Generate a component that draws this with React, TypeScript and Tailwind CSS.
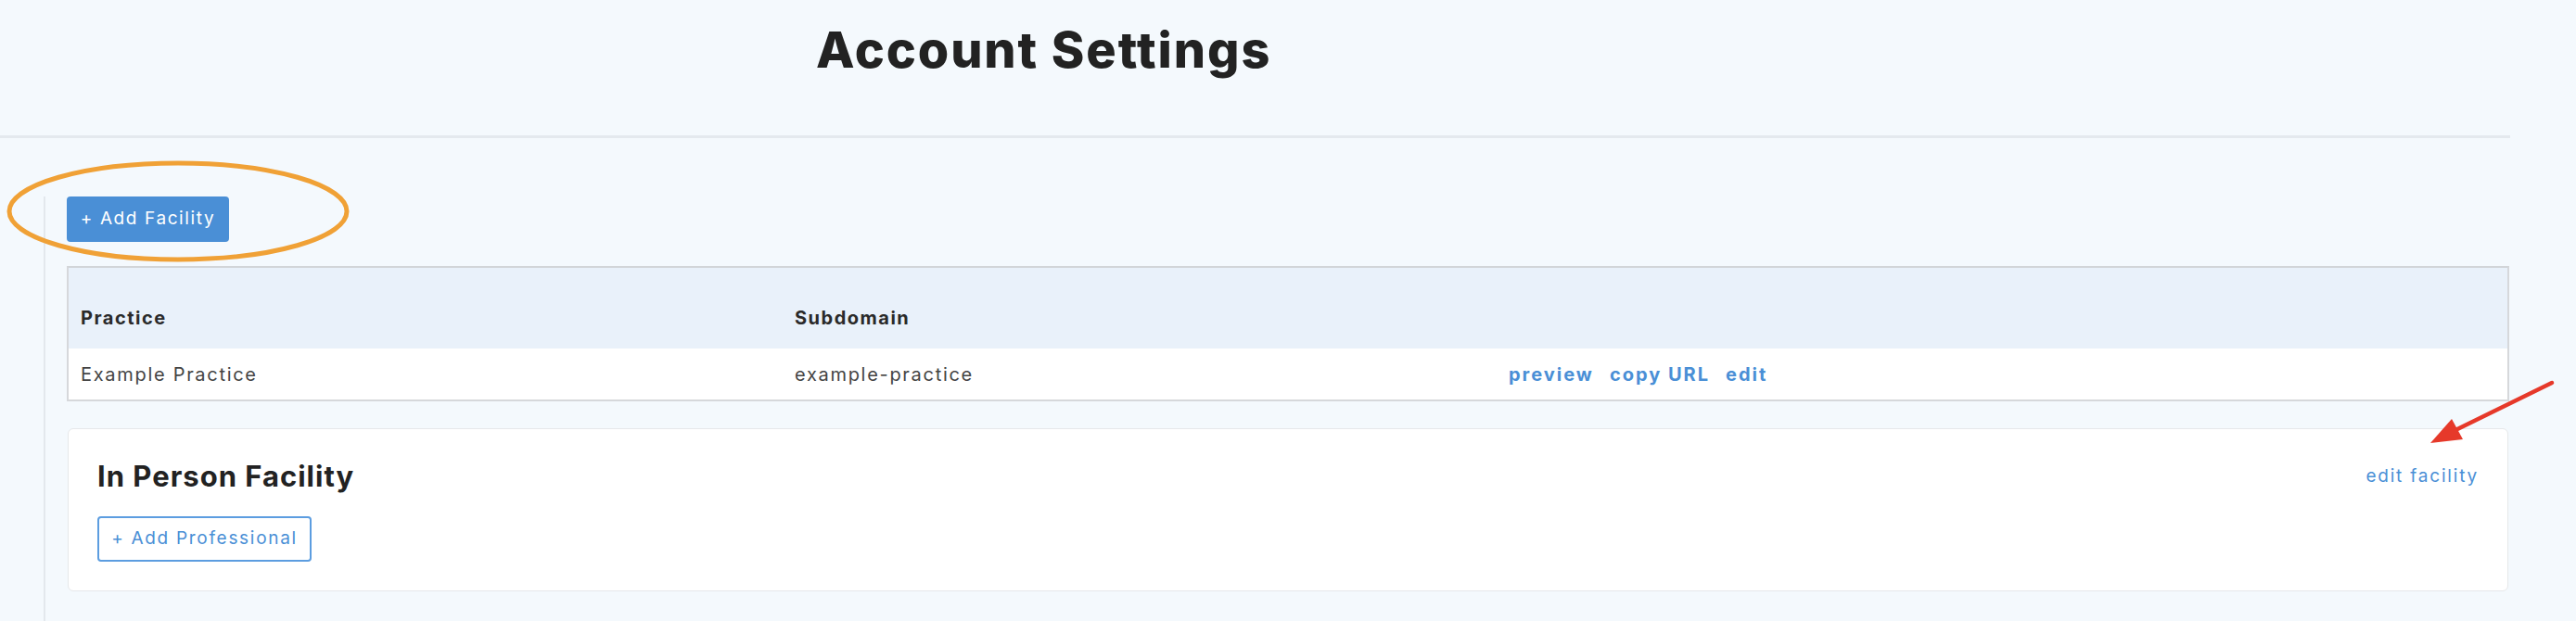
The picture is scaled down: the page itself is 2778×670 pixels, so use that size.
import React from "react";

const font = { fontFamily: "Inter, 'Liberation Sans', sans-serif" };

export default function App() {
  return (
    <div
      className="relative w-[2778px] h-[670px] overflow-hidden bg-[#f4f9fd] flex flex-col"
      style={font}
    >
      {/* Header */}
      <div className="h-[146px] pl-[880px] pt-[27px] shrink-0">
        <h1 className="text-[54px] leading-[54px] font-extrabold text-[#222222] tracking-[1.9px]">
          Account Settings
        </h1>
      </div>
      <div className="w-[2707px] h-[3px] bg-[#e4e9ee] shrink-0" />

      {/* Content */}
      <div className="mt-[63px] ml-[47px] border-l-2 border-[#e3e8ed] pl-[23px] flex-1 flex flex-col">
        <div>
          <button className="w-[175px] h-[49px] rounded-[4px] bg-[#4a8fd6] text-white text-[19px] tracking-[1.6px] flex items-center justify-center">
            + Add Facility
          </button>
        </div>

        {/* Table */}
        <div className="mt-[26px] w-[2634px] border-t-2 border-x-2 border-b-2 border-t-[#d2d5d8] border-x-[#d6d8db] border-b-[#d6d8db] bg-white">
          <div className="h-[87px] bg-[#e9f1fa] flex text-[20px] leading-[20px] font-bold tracking-[1.5px] text-[#2a2a2a]">
            <div className="w-[768px] pl-[13px] pt-[44px]">Practice</div>
            <div className="w-[770px] pl-[15px] pt-[44px]">Subdomain</div>
            <div className="flex-1" />
          </div>
          <div className="h-[55px] flex items-center text-[20px] leading-[20px] tracking-[1.7px] text-[#444444]">
            <div className="w-[768px] pl-[13px]">Example Practice</div>
            <div className="w-[770px] pl-[15px]">example-practice</div>
            <div className="flex-1 pl-[15px] flex gap-[17px] font-bold tracking-[2px] text-[#4a8fd6]">
              <span>preview</span>
              <span>copy URL</span>
              <span>edit</span>
            </div>
          </div>
        </div>

        {/* Facility card */}
        <div className="mt-[29px] ml-[1px] w-[2632px] h-[176px] bg-white border border-[#e6e8ea] rounded-[6px] px-[31px] pt-[36px]">
          <div className="flex items-center justify-between">
            <h2 className="text-[31px] leading-[30px] font-bold tracking-[1px] text-[#222222]">
              In Person Facility
            </h2>
            <span className="text-[19px] leading-[20px] tracking-[1.8px] text-[#4a8fd6]">
              edit facility
            </span>
          </div>
          <button className="mt-[28px] w-[231px] h-[49px] rounded-[4px] border-2 border-[#5c9de0] text-[#4a8fd6] text-[19px] tracking-[1.7px] flex items-center justify-center bg-white">
            + Add Professional
          </button>
        </div>
      </div>

      {/* Annotation overlay */}
      <svg
        className="absolute left-0 top-0 pointer-events-none"
        width="2778"
        height="670"
        viewBox="0 0 2778 670"
      >
        <ellipse
          cx="192"
          cy="228"
          rx="182"
          ry="52"
          fill="none"
          stroke="#f0a136"
          strokeWidth="5"
        />
        <line
          x1="2752"
          y1="413"
          x2="2644"
          y2="466"
          stroke="#e6392a"
          strokeWidth="4.5"
          strokeLinecap="round"
        />
        <polygon points="2621,478 2644,452 2656,474" fill="#e6392a" />
      </svg>
    </div>
  );
}
